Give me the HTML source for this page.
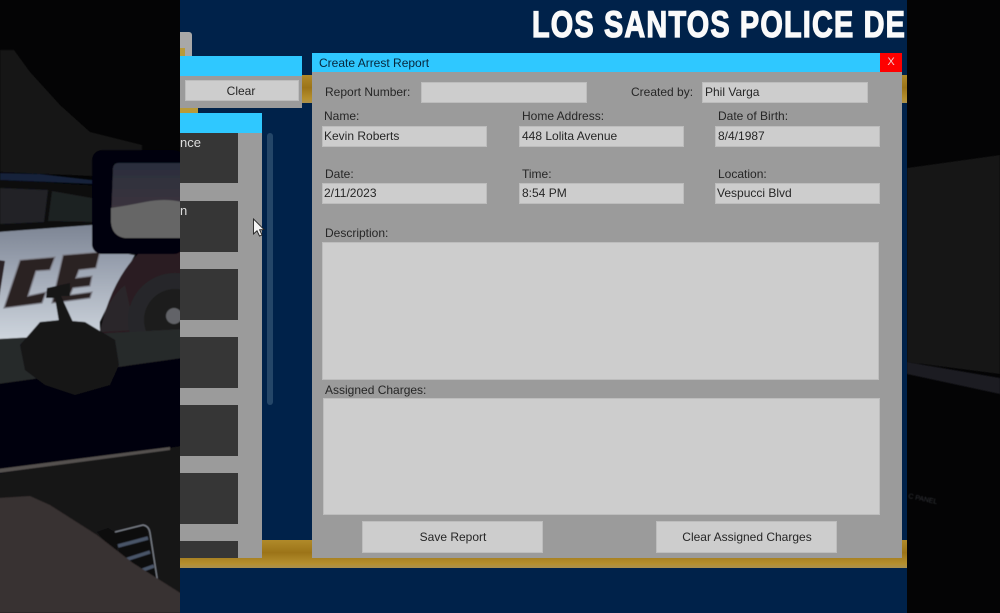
<!DOCTYPE html>
<html><head><meta charset="utf-8"><title>Create Arrest Report</title>
<style>
html,body{margin:0;padding:0;background:#000}
#p{position:relative;width:1000px;height:613px;overflow:hidden;background:#040405;font-family:"Liberation Sans",sans-serif;color:#262626;font-size:12px}
#p div{position:absolute;box-sizing:border-box}
.t{white-space:nowrap;line-height:16px;height:16px;filter:blur(.3px)}
.f{background:#cdcdcd;border:1px solid #bdbdbd;line-height:19px;padding-left:1px;white-space:nowrap}
.g{background:linear-gradient(#b08a2a,#9c7418 45%,#b5902e 85%,#a89050)}
.d{background:#363636;left:180px;width:58px}
</style></head><body><div id="p">
<svg style="position:absolute;left:0;top:0" width="1000" height="613" viewBox="0 0 1000 613">
<defs>
<filter id="b" x="-5%" y="-5%" width="110%" height="110%"><feGaussianBlur stdDeviation="0.6"/></filter>
<linearGradient id="car" x1="0" y1="0" x2="0" y2="1"><stop offset="0" stop-color="#7d8594"/><stop offset=".35" stop-color="#9aa2b0"/><stop offset="1" stop-color="#cfd6de"/></linearGradient>
<linearGradient id="sky" x1="0" y1="0" x2="0" y2="1"><stop offset="0" stop-color="#2a2e3c"/><stop offset="1" stop-color="#46383e"/></linearGradient>
</defs>
<rect x="0" y="0" width="182" height="613" fill="#040405"/>
<g filter="url(#b)">
<polygon points="0,50 14,50 30,72 60,105 90,132 142,145 142,152 100,155 92,176 0,172" fill="#161616"/>
<polygon points="0,173 40,174 92,180 92,184 0,180" fill="#12203a"/>
<polygon points="0,180 100,186 100,226 0,232" fill="#0e0f11"/>
<polygon points="0,188 48,190 44,222 0,224" fill="#202426"/>
<polygon points="52,191 92,198 92,222 48,221" fill="#1c2022"/>
<polygon points="-2,232 92,225 102,250 135,255 115,290 100,322 100,340 -2,340" fill="url(#car)"/>
<polygon points="-2,260 5,261 -2,305" fill="#2c2226"/>
<polygon points="20,260 55,257 50,270 36,271 28,296 46,292 42,303 4,308" fill="#2a2024" stroke="#7e7f88" stroke-width="1.3"/>
<polygon points="63,255 100,252 96,268 79,270 76,278 92,276 90,286 73,288 70,295 92,292 90,298 52,303" fill="#2a2024" stroke="#7e7f88" stroke-width="1.3"/>
<path d="M138,254 Q112,280 100,330 L100,340 L182,340 L182,248Z" fill="#2a1c20"/>
<path d="M100,332 Q106,300 125,285 L135,330Z" fill="#29272a"/>
<circle cx="175" cy="320" r="47" fill="#26272a"/>
<circle cx="175" cy="320" r="31" fill="#1a1b1d"/>
<circle cx="174" cy="316" r="8" fill="#626467"/>
<polygon points="-2,339 182,329 182,360 -2,384" fill="#28292b"/>
<polygon points="-2,384 182,358 182,460 -2,480" fill="#050507"/>
<path d="M47,288 L70,283 L70,296 L61,296 L73,322 L59,322 L55,298 L46,298Z" fill="#131318"/>
<polygon points="40,322 60,320 85,322 115,340 119,365 110,385 75,395 45,385 25,370 20,345" fill="#121216"/>
<polygon points="-2,474 182,446 182,613 -2,613" fill="#141416"/>
<polygon points="-2,469 170,447 170,450 -2,473" fill="#55514f"/>
<polygon points="97,532 108,528 116,533 118,560 140,585 130,570" fill="#08080b"/>
<polygon points="115,532 146,525 158,585 140,585 120,556" fill="#08080b"/>
<path d="M118,546 L148,538 M125,560 L150,552 M140,571 L154,566" stroke="#4a5468" stroke-width="3.5"/>
<path d="M115,532 L143,525 Q149,526 150,533 L158,584" stroke="#80858e" stroke-width="1.2" fill="none"/>
<polygon points="-2,498 30,496 50,505 97,535 133,563 182,594 182,613 -2,613" fill="#383130"/>
<rect x="92" y="150" width="92" height="104" rx="10" fill="#060608"/>
<path d="M118,163 H182 V238 H125 Q112,236 111,222 L113,168 Q114,163 118,163Z" fill="url(#sky)"/>
<path d="M111,208 Q130,205 145,202 Q165,198 182,202 V238 H125 Q112,236 111,222Z" fill="#666666"/>
<polygon points="907,168 1000,155 1000,374 907,362" fill="#141415"/>
<polygon points="907,362 1000,378 1000,394 907,374" fill="#1e1e22"/>
<text x="908" y="498" font-size="7" fill="#33353a" transform="rotate(12 908 498)" font-family="Liberation Sans">C PANEL</text>
</g>
</svg>

<div style="left:180px;top:0;width:727px;height:613px;background:#00224a;overflow:hidden">
<svg style="position:absolute;left:0;top:0" width="725" height="60"><text transform="translate(352,37) scale(.78,1)" font-family="Liberation Sans" font-weight="700" font-size="37" fill="#fafafa" stroke="#fafafa" stroke-width="1.3" textLength="478" lengthAdjust="spacing">LOS SANTOS POLICE DE</text></svg>
</div>
<div style="left:180px;top:32px;width:12px;height:26px;background:#a8a8a8;border-radius:0 3px 0 0"></div>
<div style="left:180px;top:48px;width:5px;height:8px;background:#b89a3a"></div>
<div style="left:180px;top:107px;width:18px;height:6px;background:#b89a3a"></div>

<div class="g" style="left:180px;top:75px;width:727px;height:28px"></div>
<div class="g" style="left:180px;top:540px;width:727px;height:28px"></div>

<div style="left:180px;top:56px;width:122px;height:20px;background:#2fc8ff"></div>
<div style="left:180px;top:76px;width:122px;height:32px;background:#9b9b9b"></div>
<div style="left:185px;top:80px;width:114px;height:21px;background:#cdcdcd;border:1px solid #bdbdbd;text-align:center;line-height:20px;padding-right:2px">Clear</div>

<div style="left:180px;top:113px;width:82px;height:20px;background:#2fc8ff"></div>
<div style="left:180px;top:133px;width:82px;height:425px;background:#9b9b9b"></div>
<div class="d" style="top:133px;height:50px"></div>
<div class="d" style="top:201px;height:51px"></div>
<div class="d" style="top:269px;height:51px"></div>
<div class="d" style="top:337px;height:51px"></div>
<div class="d" style="top:405px;height:51px"></div>
<div class="d" style="top:473px;height:51px"></div>
<div class="d" style="top:541px;height:17px"></div>
<div class="t" style="left:180px;top:135px;color:#dcdcdc;font-size:13px">nce</div>
<div class="t" style="left:180px;top:203px;color:#dcdcdc;font-size:13px">n</div>
<div style="left:267px;top:133px;width:6px;height:272px;background:#244668;border-radius:3px"></div>

<div style="left:312px;top:53px;width:590px;height:505px;background:#9b9b9b"></div>
<div style="left:312px;top:53px;width:568px;height:19px;background:#2fc8ff;padding-left:7px;line-height:20px;color:#06263c;white-space:nowrap">Create Arrest Report</div>
<div style="left:880px;top:53px;width:22px;height:19px;background:#fe0000;color:#f0d0d0;text-align:center;line-height:19px;font-size:11px">X</div>

<div class="t" style="left:325px;top:84px">Report Number:</div>
<div class="f" style="left:421px;top:82px;width:166px;height:21px"></div>
<div class="t" style="left:631px;top:84px">Created by:</div>
<div class="f" style="left:702px;top:82px;width:166px;height:21px;padding-left:2px">Phil Varga</div>

<div class="t" style="left:324px;top:108px">Name:</div>
<div class="t" style="left:522px;top:108px">Home Address:</div>
<div class="t" style="left:718px;top:108px">Date of Birth:</div>
<div class="f" style="left:322px;top:126px;width:165px;height:21px">Kevin Roberts</div>
<div class="f" style="left:519px;top:126px;width:165px;height:21px;padding-left:2px">448 Lolita Avenue</div>
<div class="f" style="left:715px;top:126px;width:165px;height:21px;padding-left:2px">8/4/1987</div>

<div class="t" style="left:325px;top:166px">Date:</div>
<div class="t" style="left:522px;top:166px">Time:</div>
<div class="t" style="left:718px;top:166px">Location:</div>
<div class="f" style="left:322px;top:183px;width:165px;height:21px">2/11/2023</div>
<div class="f" style="left:519px;top:183px;width:165px;height:21px;padding-left:2px">8:54 PM</div>
<div class="f" style="left:715px;top:183px;width:165px;height:21px;padding-left:1px">Vespucci Blvd</div>

<div class="t" style="left:325px;top:225px">Description:</div>
<div class="f" style="left:322px;top:242px;width:557px;height:138px"></div>
<div class="t" style="left:325px;top:382px">Assigned Charges:</div>
<div class="f" style="left:323px;top:398px;width:557px;height:117px"></div>

<div class="f" style="left:362px;top:521px;width:181px;height:32px;text-align:center;line-height:31px">Save Report</div>
<div class="f" style="left:656px;top:521px;width:181px;height:32px;text-align:center;line-height:31px">Clear Assigned Charges</div>

<svg style="position:absolute;left:252px;top:218px" width="14" height="20" viewBox="0 0 14 20"><path d="M1.5,1 V16 L5,12.8 L7.5,18 L10,17 L7.6,11.8 L12,11.6Z" fill="#f4f4f4" stroke="#222" stroke-width=".9"/></svg>
</div></body></html>
